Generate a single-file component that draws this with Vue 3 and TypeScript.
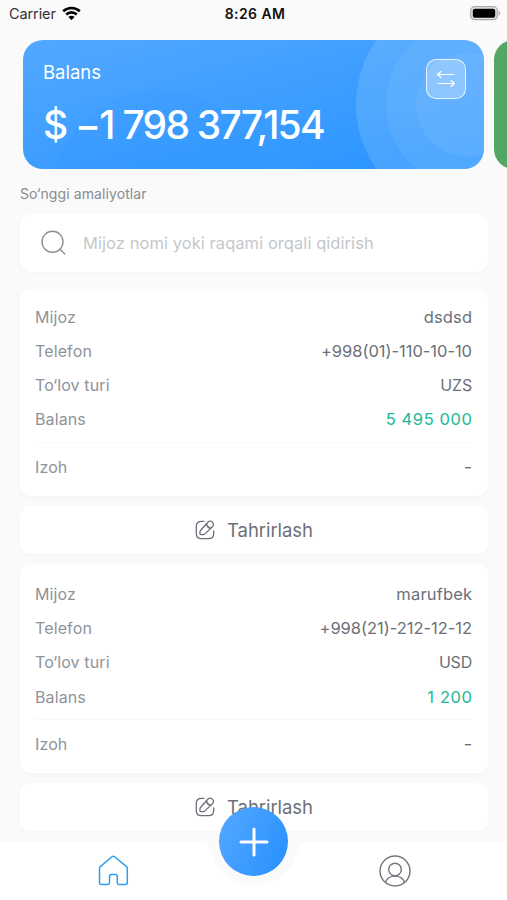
<script setup lang="ts">
interface Row {
  key: string
  label: string
  value: string
}

interface Customer {
  id: number
  rows: Row[]
  note: string
}

const customers: Customer[] = [
  {
    id: 1,
    rows: [
      { key: 'name', label: 'Mijoz', value: 'dsdsd' },
      { key: 'phone', label: 'Telefon', value: '+998(01)-110-10-10' },
      { key: 'currency', label: 'To‘lov turi', value: 'UZS' },
      { key: 'total', label: 'Balans', value: '5 495 000' },
    ],
    note: '-',
  },
  {
    id: 2,
    rows: [
      { key: 'name', label: 'Mijoz', value: 'marufbek' },
      { key: 'phone', label: 'Telefon', value: '+998(21)-212-12-12' },
      { key: 'currency', label: 'To‘lov turi', value: 'USD' },
      { key: 'total', label: 'Balans', value: '1 200' },
    ],
    note: '-',
  },
]
</script>

<template>
  <div class="screen">
    <header class="status">
      <div class="carrier">
        <span>Carrier</span>
        <svg width="19" height="15" viewBox="0 0 19 15">
          <g fill="none" stroke="#050505" stroke-width="2.6">
            <path d="M1.2 5.3C5.8.8 13.2.8 17.8 5.3" />
            <path d="M4.2 8.5c3-2.9 7.6-2.9 10.6 0" />
          </g>
          <path d="M9.5 14.2 6.4 11c1.8-1.6 4.4-1.6 6.2 0z" fill="#050505" />
        </svg>
      </div>
      <span class="time">8:26 AM</span>
      <svg class="battery" width="31" height="15" viewBox="0 0 31 15">
        <rect x=".7" y=".7" width="26.6" height="13" rx="4" fill="#e5e5e5" stroke="#a9a9a9" stroke-width="1.2" />
        <rect x="2.8" y="2.7" width="22.4" height="9" rx="2" fill="#000" />
        <path d="M28.6 4.8c2 .8 2 4 0 4.8z" fill="#a9a9a9" />
      </svg>
    </header>

    <section class="carousel">
      <article class="balance">
        <svg class="rings" width="461" height="129" viewBox="0 0 461 129">
          <circle cx="137" cy="160" r="110" fill="#1687ff" opacity=".06" />
          <circle cx="445" cy="64.500" r="112" fill="#fff" opacity=".13" />
          <circle cx="445" cy="64.500" r="82" fill="#fff" opacity=".06" />
          <circle cx="445" cy="64.500" r="52" fill="#fff" opacity=".06" />
        </svg>
        <div class="balance-text">
          <span class="balance-label">Balans</span>
          <strong class="balance-sum">$ −1 798 377,154</strong>
        </div>
        <button class="swap" type="button">
          <svg width="20" height="18" viewBox="0 0 20 18" fill="none" stroke="#fff" stroke-width="1.200" stroke-linecap="round" stroke-linejoin="round">
            <path d="M18 4.500H1.800M5 1.500 1.500 4.500 5 7.500M2 13.500h16.200M15 10.500l3.500 3-3.500 3" />
          </svg>
        </button>
      </article>
      <article class="next-card"></article>
    </section>

    <h2 class="title">So‘nggi amaliyotlar</h2>

    <label class="search">
      <svg width="26" height="26" viewBox="0 0 26 26" fill="none" stroke="#8c9096" stroke-width="1.400" stroke-linecap="round">
        <circle cx="11.500" cy="11.800" r="10.500" />
        <path d="m19 19.300 4.800 4.600" />
      </svg>
      <span class="placeholder">Mijoz nomi yoki raqami orqali qidirish</span>
    </label>

    <main class="list">
      <template v-for="customer in customers" :key="customer.id">
        <article class="card">
          <div v-for="row in customer.rows" :key="row.key" class="row" :class="row.key">
            <span class="label">{{ row.label }}</span>
            <span class="value">{{ row.value }}</span>
          </div>
          <hr />
          <div class="row note">
            <span class="label">Izoh</span>
            <span class="value">{{ customer.note }}</span>
          </div>
        </article>
        <button class="edit" type="button">
          <svg width="20" height="20" viewBox="0 0 20 20" fill="none" stroke="#6b7078" stroke-width="1.300" stroke-linecap="round" stroke-linejoin="round">
            <path d="M9 1.300H6.500Q1.300 1.300 1.300 6.500v7q0 5.200 5.200 5.200h7q5.200 0 5.200-5.200V11" />
            <path d="M5.700 10.200 12.800 2.300q2.200-2.200 4.500-.2 2.300 2.200.1 4.600l-7.500 7.200q-.7.600-1.700.7l-2 .1q-1.300 0-1.300-1.300l.1-1.700q.1-.9.700-1.500z" />
            <path d="M11.400 4q.8 3.500 4.300 4.300" />
          </svg>
          <span>Tahrirlash</span>
        </button>
      </template>
    </main>

    <nav class="tabs">
      <svg class="tabs-shape" width="507" height="58" viewBox="0 0 507 58">
        <path d="M0 0H199Q209 0 211 9C215 29 232 43 254 43S293 29 297 9Q299 0 309 0H507V58H0Z" fill="#fff" />
      </svg>
      <a class="tab">
        <svg width="31" height="31" viewBox="0 0 31 31" fill="none" stroke="#2ba0ef" stroke-width="1.500" stroke-linejoin="round">
          <path d="M1.500 13.300Q1.500 12.300 2.300 11.600L14 1.800q1.300-1.100 2.600 0L28.500 11.600q.8.700.8 1.700V27.500q0 2-2 2H21q-1.700 0-1.700-1.700V21.500q0-2-2-2H13.500q-2 0-2 2v6.300q0 1.700-1.700 1.700H3.500q-2 0-2-2Z" />
        </svg>
      </a>
      <a class="tab">
        <svg width="32" height="32" viewBox="0 0 32 32" fill="none" stroke="#71767d" stroke-width="1.400">
          <circle cx="16" cy="16" r="15" />
          <circle cx="16" cy="14.500" r="6.300" />
          <path d="M6.500 27.300C9 19.100 23 19.100 25.500 27.300" />
        </svg>
      </a>
      <button class="fab" type="button">
        <svg width="30" height="30" viewBox="0 0 30 30" stroke="#fff" stroke-width="3" stroke-linecap="round">
          <path d="M15 2v26M2 15h26" />
        </svg>
      </button>
    </nav>
  </div>
</template>

<style>
body {
  margin: 0;
  background: #fafafa;
}
</style>

<style scoped>
.screen {
  position: relative;
  box-sizing: border-box;
  width: 507px;
  height: 900px;
  overflow: hidden;
  background: #fafafa;
  font-family: Inter, "Liberation Sans", sans-serif;
  color: #6b7078;
}
button {
  font: inherit;
  color: inherit;
  border: 0;
  padding: 0;
}
svg {
  display: block;
  flex: none;
}
.status {
  display: grid;
  grid-template-columns: 1fr auto 1fr;
  align-items: center;
  height: 27px;
  padding: 0 6px 0 9px;
  color: #333;
  font-size: 14.5px;
}
.carrier {
  display: flex;
  align-items: center;
  gap: 6px;
  letter-spacing: -0.1px;
}
.time {
  font-weight: 600;
  font-size: 14px;
  letter-spacing: 0.42px;
  color: #111;
}
.battery {
  justify-self: end;
}
.carousel {
  display: flex;
  gap: 10px;
  margin: 13px 0 0 23px;
}
.balance {
  position: relative;
  display: flex;
  justify-content: space-between;
  flex: none;
  box-sizing: border-box;
  width: 461px;
  height: 129px;
  padding: 19px 18px 0 20px;
  overflow: hidden;
  border-radius: 20px;
  background: linear-gradient(165deg, #52a8ff 0%, #2c96ff 90%);
  color: #fff;
}
.rings {
  position: absolute;
  inset: 0;
}
.balance-text {
  position: relative;
  display: flex;
  flex-direction: column;
}
.balance-label {
  font-size: 18.5px;
  line-height: 27px;
}
.balance-sum {
  margin-top: 14px;
  font-size: 39px;
  line-height: 50px;
  font-weight: 500;
  letter-spacing: -1.75px;
  white-space: nowrap;
}
.swap {
  position: relative;
  display: grid;
  place-items: center;
  box-sizing: border-box;
  width: 40px;
  height: 40px;
  border: 1.5px solid rgba(255, 255, 255, 0.8);
  border-radius: 10px;
  background: rgba(255, 255, 255, 0.27);
}
.next-card {
  flex: none;
  width: 461px;
  height: 129px;
  border-radius: 20px;
  background: #53a663;
}
.title {
  margin: 15px 0 0 20px;
  font-size: 14px;
  line-height: 20px;
  font-weight: 400;
  letter-spacing: 0.1px;
  color: #888c93;
}
.search {
  display: flex;
  align-items: center;
  gap: 16px;
  height: 58px;
  margin: 10px 19px 0 20px;
  padding-left: 21px;
  box-sizing: border-box;
  border-radius: 12px;
  background: #fff;
  box-shadow: 0 2px 5px rgba(0, 0, 0, 0.018);
}
.placeholder {
  font-size: 16.5px;
  letter-spacing: 0.06px;
  color: #c4c7cb;
}
.list {
  display: flex;
  flex-direction: column;
  gap: 10px;
  margin: 17px 19px 0 20px;
}
.card {
  flex: none;
  height: 207px;
  padding: 10.5px 16px 0 15px;
  box-sizing: border-box;
  border-radius: 11px;
  background: #fff;
  box-shadow: 0 2px 5px rgba(0, 0, 0, 0.022);
}
.row {
  display: flex;
  align-items: center;
  justify-content: space-between;
  height: 34.2px;
  font-size: 16px;
}
.label {
  letter-spacing: 0.12px;
  color: #8f9399;
}
.value {
  font-size: 16.5px;
}
.name .value {
  letter-spacing: 0.15px;
  margin-right: -0.15px;
}
.phone .value {
  letter-spacing: -0.03px;
}
.currency .value {
  font-size: 16px;
  letter-spacing: -0.2px;
}
.total .value {
  letter-spacing: 0.6px;
  margin-right: -0.6px;
  color: #20b994;
}
.note .value {
  transform: scaleX(1.15);
}
.card hr {
  height: 1px;
  margin: 5.5px 0 7px;
  border: 0;
  background: #f8f8f9;
}
.edit {
  display: flex;
  align-items: center;
  justify-content: center;
  gap: 12px;
  flex: none;
  height: 48px;
  border-radius: 10px;
  background: #fff;
  box-shadow: 0 2px 5px rgba(0, 0, 0, 0.02);
  font-size: 18.5px;
  letter-spacing: -0.06px;
}
.edit + .card {
  height: 208.5px;
  padding-top: 13px;
}
.tabs {
  position: absolute;
  inset: auto 0 0;
  display: flex;
  justify-content: space-between;
  box-sizing: border-box;
  height: 58px;
  padding: 13px 96px 0 98px;
}
.tabs-shape {
  position: absolute;
  inset: 0;
}
.tab {
  position: relative;
}
.fab {
  position: absolute;
  top: -35px;
  left: 219px;
  display: grid;
  place-items: center;
  width: 69px;
  height: 69px;
  border-radius: 50%;
  background: linear-gradient(115deg, #55a9ff, #258fff);
}
</style>
